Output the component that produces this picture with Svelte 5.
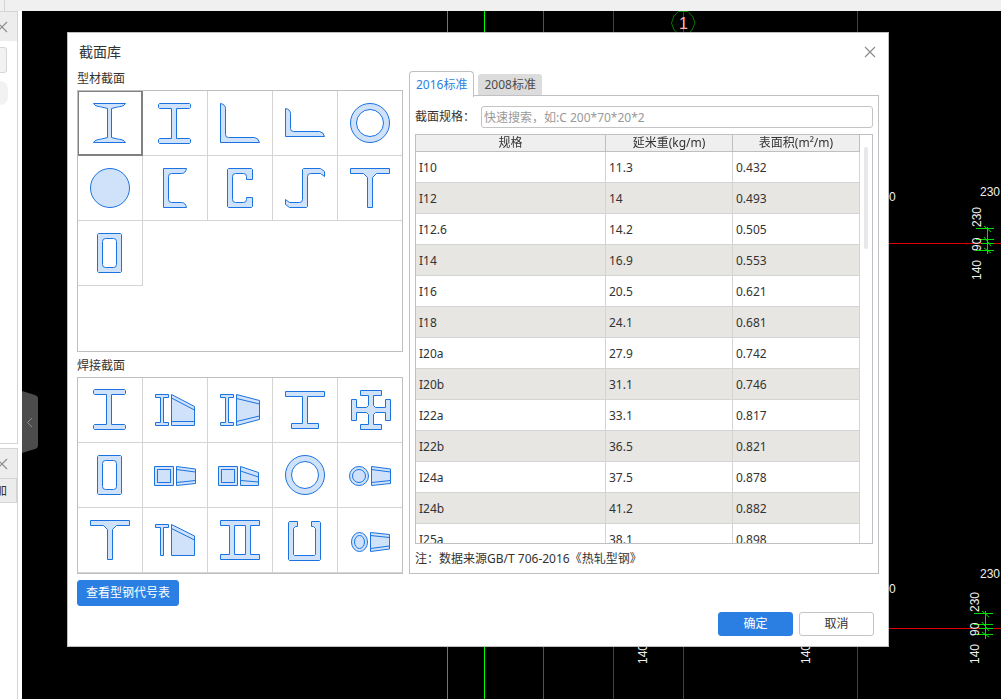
<!-- SectionLibrary: steel section picker over the drawing canvas -->
<script lang="ts">
  interface Section {
    name: string;
    d: string;
    // open lines drawn over the filled outline
    lines?: string;
  }

  const ring = 'M12.5 32a19.5 19.5 0 1 0 39 0a19.5 19.5 0 1 0 -39 0ZM18.5 32a13.5 13.5 0 1 0 27 0a13.5 13.5 0 1 0 -27 0Z';
  const box = 'M20.5 12.5H42.5L43.5 13.5V50.5L42.5 51.5H20.5L19.5 50.5V13.5ZM27.5 17.5H35.5Q38.5 17.5 38.5 20.5V43.5Q38.5 46.5 35.5 46.5H27.5Q24.5 46.5 24.5 43.5V20.5Q24.5 17.5 27.5 17.5Z';
  const tee = 'M12.5 12.5H51.5V17.5H38.5L34.5 21.5V51.5H29.5V21.5L25.5 17.5H12.5Z';
  const smallI = 'M12.5 16.5H25.5V19.5H20.5V44.5H25.5V47.5H12.5V44.5H17.5V19.5H12.5Z';

  const profiles: Section[] = [
    { name: '工字钢', d: 'M15.5 12.5H47.5C46 15.5 42 15.5 39.5 16L33.5 17.5V46.5L39.5 48C42 48.5 46 48.5 47.5 51.5H15.5C17 48.5 21 48.5 23.5 48L29.5 46.5V17.5L23.5 16C21 15.5 17 15.5 15.5 12.5Z' },
    { name: 'H型钢', d: 'M16.5 12.5H46.5L47.5 13.5V16.5L46.5 17.5H33.5V47.5H46.5L47.5 48.5V51.5L46.5 52.5H16.5L15.5 51.5V48.5L16.5 47.5H28.5V17.5H16.5L15.5 16.5V13.5Z' },
    { name: '等边角钢', d: 'M12.5 12.5Q17.5 13.5 17.5 17.5V43.5Q17.5 46.5 20.5 46.5H46.5Q50.5 47 51.5 51.5H12.5Z' },
    { name: '不等边角钢', d: 'M12.5 17.5Q17.5 18.5 17.5 22.5V37.5Q17.5 40.5 20.5 40.5H46.5Q50.5 41 51.5 45.5H12.5Z' },
    { name: '圆管', d: ring },
    { name: '圆钢', d: 'M12.5 32a19.5 19.5 0 1 0 39 0a19.5 19.5 0 1 0 -39 0Z' },
    { name: '槽钢', d: 'M20.5 12.5H43.5Q42.5 17.5 38.5 17.5H28.5Q25.5 17.5 25.5 20.5V43.5Q25.5 46.5 28.5 46.5H38.5Q42.5 46.5 43.5 51.5H20.5Z' },
    { name: 'C型钢', d: 'M20.5 12.5H43.5L44.5 13.5V23.5H38.5V20.5Q38.5 17.5 35.5 17.5H27.5Q24.5 17.5 24.5 20.5V43.5Q24.5 46.5 27.5 46.5H35.5Q38.5 46.5 38.5 43.5V41.5H44.5V50.5L43.5 51.5H20.5L19.5 50.5V13.5Z' },
    { name: 'Z型钢', d: 'M30.5 12.5H47.5L51.5 15.5V20.5L47.5 17.5H37.5Q34.5 17.5 34.5 20.5V50.5L33.5 51.5H16.5L12.5 48.5V43.5L16.5 46.5H26.5Q29.5 46.5 29.5 43.5V13.5Z' },
    { name: 'T型钢', d: tee },
    { name: '方管', d: box }
  ];

  const taper = 'M33.5 23.5L52.5 26V40.5L33.5 42.5Z';
  const taperLines = 'M33.5 26.5L52.5 29M33.5 39.5L52.5 37.5';

  const welded: Section[] = [
    { name: '焊接H型', d: 'M16.5 11.5H46.5L47.5 12.5V15.5L46.5 16.5H33.5V46.5H46.5L47.5 47.5V50.5L46.5 51.5H16.5L15.5 50.5V47.5L16.5 46.5H28.5V16.5H16.5L15.5 15.5V12.5Z' },
    { name: '单坡变截面H型', d: smallI + 'M28.5 16.5L51.5 28.5V47.5H28.5Z', lines: 'M28.5 20L51.5 32M28.5 43.5H51.5' },
    { name: '双坡变截面H型', d: smallI + 'M28.5 16.5L51.5 22.5V41.5L28.5 47.5Z', lines: 'M28.5 20.5L51.5 26M28.5 43.5L51.5 38' },
    { name: '不对称H型', d: 'M12.5 13.5H51.5V18.5H34.5V45.5H45.5V50.5H18.5V45.5H29.5V18.5H12.5Z' },
    { name: '十字型', d: 'M22.5 12.5H43.5V17.5H35.5V27.5L37.5 29.5H47.5V21.5H52.5V42.5H47.5V34.5H37.5L35.5 36.5V46.5H43.5V51.5H22.5V46.5H30.5V36.5L28.5 34.5H18.5V42.5H13.5V21.5H18.5V29.5H28.5L30.5 27.5V17.5H22.5Z' },
    { name: '焊接箱型', d: box },
    { name: '双坡变截面箱型', d: 'M11.5 23.5H30.5V42.5H11.5Z' + taper, lines: 'M14.5 26.5H27.5V39.5H14.5Z' + taperLines },
    { name: '单坡变截面箱型', d: 'M10.5 23.5H29.5V42.5H10.5ZM32.5 23.5L50.5 29.5V42.5H32.5Z', lines: 'M13.5 26.5H26.5V39.5H13.5ZM32.5 28L50.5 34M32.5 37.5L50.5 39' },
    { name: '焊接圆管', d: ring },
    { name: '变截面圆管', d: 'M11.5 33a9.5 9.5 0 1 0 19 0a9.5 9.5 0 1 0 -19 0Z' + taper, lines: 'M14.5 33a6.5 6.5 0 1 0 13 0a6.5 6.5 0 1 0 -13 0Z' + taperLines },
    { name: '焊接T型', d: tee },
    { name: '变截面T型', d: 'M12.5 16.5H25.5V19.5H20.5V47.5H17.5V19.5H12.5ZM28.5 16.5L51.5 28V47.5H28.5Z', lines: 'M28.5 20.5L51.5 32' },
    { name: '双腹板H型', d: 'M12.5 12.5H51.5V17.5H42.5V46.5H51.5V51.5H12.5V46.5H21.5V17.5H12.5ZM26.5 17.5V46.5H37.5V17.5Z' },
    { name: '焊接U型', d: 'M16.5 13.5H24.5V18.5H22.5L20.5 20.5V46.5L21.5 47.5H41.5L42.5 46.5V20.5L40.5 18.5H38.5V13.5H46.5L47.5 14.5V51.5L46.5 52.5H16.5L15.5 51.5V14.5Z' },
    { name: '变截面椭圆管', d: 'M13.5 34a8 9.5 0 1 0 16 0a8 9.5 0 1 0 -16 0ZM32.5 24.5L51.5 26.5V41L32.5 43.5Z', lines: 'M16.5 34a5 6.5 0 1 0 10 0a5 6.5 0 1 0 -10 0ZM32.5 27.5L51.5 29.5M32.5 40.5L51.5 38' }
  ];

  const specs = [
    ['I10', '11.3', '0.432'],
    ['I12', '14', '0.493'],
    ['I12.6', '14.2', '0.505'],
    ['I14', '16.9', '0.553'],
    ['I16', '20.5', '0.621'],
    ['I18', '24.1', '0.681'],
    ['I20a', '27.9', '0.742'],
    ['I20b', '31.1', '0.746'],
    ['I22a', '33.1', '0.817'],
    ['I22b', '36.5', '0.821'],
    ['I24a', '37.5', '0.878'],
    ['I24b', '41.2', '0.882'],
    ['I25a', '38.1', '0.898']
  ];

  let selected = $state('工字钢');
  let tab = $state('2016');
  let query = $state('');
  let rows = $derived(specs.filter((s) => s[0].toLowerCase().includes(query.trim().toLowerCase())));
  let scrollTop = $state(0);

  // dimension labels standing on their side: x, y of the baseline start
  const sideLabels = [
    { x: 981, y: 227, text: '230' },
    { x: 981, y: 251, text: '90' },
    { x: 981, y: 280, text: '140' },
    { x: 979, y: 612, text: '230' },
    { x: 979, y: 636, text: '90' },
    { x: 979, y: 664, text: '140' },
    { x: 647, y: 664, text: '140' },
    { x: 810, y: 664, text: '140' }
  ];
</script>

{#snippet cell(s: Section)}
  <button
    class="cell"
    class:selected={selected === s.name}
    aria-label={s.name}
    onclick={() => (selected = s.name)}
  >
    <svg viewBox="0 0 64 64" width="64" height="64" aria-hidden="true">
      <path d={s.d} fill="#d0e2fa" fill-rule="evenodd" stroke="#1a73e0" />
      {#if s.lines}
        <path d={s.lines} fill="none" stroke="#1a73e0" />
      {/if}
    </svg>
  </button>
{/snippet}

{#snippet cross()}
  <svg viewBox="0 0 12 12" width="12" height="12" aria-hidden="true">
    <path d="M1 1L11 11M11 1L1 11" stroke="currentColor" stroke-width="1.2" fill="none" />
  </svg>
{/snippet}

<div class="app">
  <div class="toolbar"></div>
  <div class="workspace">
    <aside>
      <section class="dock upper">
        <header><button class="plain" aria-label="关闭属性">{@render cross()}</button></header>
        <div class="stub"></div>
        <div class="dot"></div>
      </section>
      <section class="dock lower">
        <header><button class="plain" aria-label="关闭列表">{@render cross()}</button></header>
        <button class="add">加</button>
      </section>
    </aside>

    <main>
      <svg class="drawing" viewBox="22 11 979 688" preserveAspectRatio="xMinYMin slice" aria-hidden="true">
        <g fill="none">
          <path d="M447.5 11V699" stroke="#00c800" />
          <path d="M484.5 11V699" stroke="#00ff00" />
          <path d="M543.5 11V699" stroke="#008c00" />
          <path d="M613.5 11V699" stroke="#006e00" />
          <path d="M683.5 11V699M857.5 11V699" stroke="#d80000" />
          <path d="M67 243.5H1001M67 628.5H1001" stroke="#e00000" />
          <path d="M678.5 11.5H688L693 17L695 23L692 30L688 34H679L674 30L671.5 23L674 16Z" stroke="#007a00" />
          <path d="M976 228.5H994M976 239.5H994M981 243.5H994M976 250.5H994M987.5 227V254M984 226L991 232M984 237L991 246M984 248L991 253" stroke="#00e000" />
          <path d="M974 613.5H993M974 624.5H993M979 628.5H993M974 634.5H993M985.5 611V639M982 611L989 617M982 622L989 631M982 632L989 637" stroke="#00e000" />
        </g>
        <g class="dims">
          <text class="axis" x="679" y="29">1</text>
          <text x="980" y="196">230</text>
          <text x="980" y="578">230</text>
          <text x="889" y="201">0</text>
          <text x="889" y="593">0</text>
          {#each sideLabels as l}
            <text transform="translate({l.x} {l.y}) rotate(-90)">{l.text}</text>
          {/each}
        </g>
      </svg>

      <button class="handle" aria-label="收起面板">
        <svg viewBox="0 0 16 62" width="16" height="62" aria-hidden="true">
          <path d="M0 0L13 4Q16 5 16 8V54Q16 57 13 58L0 62Z" fill="#4c4c4c" />
          <path d="M10 27L5.5 31.5L10 36" fill="none" stroke="#8c8c8c" />
        </svg>
      </button>

      <div class="dialog" role="dialog" aria-labelledby="dialog-title">
        <div class="title-bar">
          <h1 id="dialog-title">截面库</h1>
          <button class="plain" aria-label="关闭">{@render cross()}</button>
        </div>

        <div class="content">
          <div class="picker">
            <h2>型材截面</h2>
            <div class="grid profiles">
              {#each profiles as s}{@render cell(s)}{/each}
            </div>
            <h2>焊接截面</h2>
            <div class="grid">
              {#each welded as s}{@render cell(s)}{/each}
            </div>
          </div>

          <div class="standards">
            <div class="tabs" role="tablist">
              <button role="tab" aria-selected={tab === '2016'} onclick={() => (tab = '2016')}>2016标准</button>
              <button role="tab" aria-selected={tab === '2008'} onclick={() => (tab = '2008')}>2008标准</button>
            </div>
            <div class="panel">
              <div class="search">
                <label for="spec">截面规格：</label>
                <input id="spec" type="text" bind:value={query} placeholder="快速搜索，如:C 200*70*20*2" />
              </div>
              <div class="table-box">
                <div class="scroller" onscroll={(e) => (scrollTop = e.currentTarget.scrollTop)}>
                  <table>
                    <thead>
                      <tr>
                        <th>规格</th>
                        <th class="num">延米重(kg/m)</th>
                        <th class="num">表面积(m²/m)</th>
                      </tr>
                    </thead>
                    <tbody>
                      {#each rows as row}
                        <tr>
                          {#each row as value}<td>{value}</td>{/each}
                        </tr>
                      {/each}
                    </tbody>
                  </table>
                </div>
                <div class="track">
                  <div class="thumb" style:transform="translateY({scrollTop}px)"></div>
                </div>
              </div>
              <p>注：数据来源GB/T 706-2016《热轧型钢》</p>
            </div>
          </div>
        </div>

        <div class="footer">
          <button class="btn primary codes">查看型钢代号表</button>
          <div class="actions">
            <button class="btn primary">确定</button>
            <button class="btn">取消</button>
          </div>
        </div>
      </div>
    </main>
  </div>
</div>

<style>
  :global(body) {
    background: #fff;
  }

  .app {
    display: flex;
    flex-direction: column;
    height: 100vh;
    overflow: hidden;
    font-family: 'Noto Sans', 'Noto Sans CJK SC', sans-serif;
    font-size: 12px;
    line-height: 16px;
    color: #333;
  }

  .app *,
  .app {
    box-sizing: border-box;
  }

  button,
  input {
    font: inherit;
    color: inherit;
    margin: 0;
    padding: 0;
  }

  button {
    cursor: pointer;
  }

  svg {
    display: block;
  }

  h1,
  h2,
  p {
    margin: 0;
    font-weight: normal;
  }

  .toolbar {
    height: 11px;
    flex-shrink: 0;
    background: #f0f0f0;
  }

  .toolbar::before {
    content: '';
    display: block;
    width: 4px;
    height: 11px;
    border-right: 1px solid #d4d4d4;
  }

  .workspace {
    flex: 1;
    display: flex;
    min-height: 0;
  }

  /* docked panels on the left, mostly collapsed */
  aside {
    width: 22px;
    padding-right: 4px;
    display: flex;
    flex-direction: column;
    gap: 4px;
    flex-shrink: 0;
  }

  .dock {
    border: 1px solid #d4d4d4;
    border-left: none;
    overflow: hidden;
  }

  .upper {
    flex: 433 1 0;
  }

  .lower {
    flex: 251 1 0;
    border-bottom: none;
  }

  .dock header {
    display: flex;
    align-items: center;
    justify-content: flex-end;
    height: 29px;
    padding-right: 9px;
    background: #ededee;
  }

  .plain {
    background: none;
    border: none;
    color: #8c8c8c;
  }

  .stub {
    width: 7px;
    height: 26px;
    margin-top: 6px;
    border: 1px solid #d8d8d8;
    border-left: none;
    border-radius: 0 3px 3px 0;
    background: #f2f2f2;
  }

  .dot {
    width: 8px;
    height: 24px;
    margin-top: 8px;
    border-radius: 0 12px 12px 0;
    background: #f2f2f2;
  }

  .add {
    display: flex;
    justify-content: flex-end;
    align-items: center;
    width: 17px;
    height: 25px;
    padding-right: 9px;
    border: 1px solid #d4d4d4;
    border-left: none;
    background: #ececec;
    white-space: nowrap;
  }

  main {
    flex: 1;
    position: relative;
    background: #000;
    overflow: hidden;
  }

  .drawing {
    width: 100%;
    height: 100%;
  }

  .dims {
    font-family: 'Liberation Sans', sans-serif;
    font-size: 12px;
    fill: #f0f0f0;
  }

  .axis {
    font-size: 16px;
    fill: #ffb0b0;
  }

  .handle {
    position: absolute;
    left: 0;
    top: 380px;
    border: none;
    background: none;
  }

  .dialog {
    position: absolute;
    left: 45px;
    right: 112px;
    top: 21px;
    padding: 0 9px 10px;
    background: #fff;
    border: 1px solid #bfbfbf;
  }

  .title-bar {
    display: flex;
    align-items: center;
    justify-content: space-between;
    height: 38px;
    padding: 0 3px 0 2px;
  }

  h1 {
    font-size: 14px;
    line-height: 20px;
  }

  .content {
    display: flex;
    gap: 6px;
  }

  h2 {
    font-size: 12px;
    line-height: 16px;
    margin-bottom: 3px;
  }

  .grid {
    display: grid;
    grid-template-columns: repeat(4, 65px) 64px;
    grid-auto-rows: 65px;
    border: 1px solid #bfbfbf;
  }

  .profiles {
    min-height: 262px;
    align-content: start;
    margin-bottom: 6px;
  }

  .cell {
    border: 0 solid #d4d4d4;
    border-width: 0 1px 1px 0;
    background: #fff;
    overflow: hidden;
  }

  .cell:nth-child(5n) {
    border-right-width: 0;
  }

  .cell.selected {
    border-color: #808080;
    box-shadow: inset 0 0 0 1px #808080;
  }

  .standards {
    flex: 1;
    min-width: 0;
    display: flex;
    flex-direction: column;
  }

  .tabs {
    display: flex;
    align-items: flex-end;
    gap: 4px;
    height: 25px;
    margin-bottom: -1px;
  }

  .tabs button {
    height: 21px;
    margin-bottom: 1px;
    padding: 0 6px;
    border: none;
    border-radius: 3px 3px 0 0;
    background: #dcdcdc;
    color: #4c4c4c;
  }

  .tabs button[aria-selected='true'] {
    height: 26px;
    margin-bottom: -1px;
    border: 1px solid #bfc0c4;
    border-bottom: none;
    border-radius: 4px 4px 0 0;
    background: #fff;
    color: #2c7fe2;
    z-index: 1;
  }

  .panel {
    flex: 1;
    display: flex;
    flex-direction: column;
    min-height: 0;
    padding: 10px 5px 6px;
    border: 1px solid #bfc0c4;
  }

  .search {
    display: flex;
    align-items: center;
    gap: 6px;
    margin-bottom: 6px;
  }

  .search input {
    flex: 1;
    min-width: 0;
    height: 22px;
    padding: 0 2px;
    border: 1px solid #c4c4c4;
    border-radius: 3px;
    outline: none;
  }

  .search input::placeholder {
    color: #999;
  }

  .table-box {
    flex: 1 1 0;
    display: flex;
    min-height: 0;
    border: 1px solid #bfc0c4;
  }

  .scroller {
    flex: 1;
    overflow-y: auto;
    scrollbar-width: none;
  }

  table {
    width: 100%;
    table-layout: fixed;
    border-collapse: separate;
    border-spacing: 0;
  }

  th,
  td {
    border: 0 solid #d4d4d4;
    border-width: 0 1px 1px 0;
  }

  th {
    position: sticky;
    top: 0;
    height: 17px;
    padding: 0;
    border-color: #bfbfbf;
    background: #efefef;
    font-weight: normal;
    line-height: 16px;
  }

  .num {
    width: 127px;
  }

  td {
    height: 31px;
    padding: 2px 3px 0;
  }

  tbody tr:nth-child(even) {
    background: #e8e6e2;
  }

  .track {
    width: 12px;
    padding: 12px 4px 0;
  }

  .thumb {
    height: 102px;
    border-radius: 2px;
    background: #e8e8e8;
  }

  p {
    margin-top: 7px;
  }

  .footer {
    display: flex;
    justify-content: space-between;
    align-items: flex-start;
    padding: 6px 5px 0 0;
  }

  .actions {
    display: flex;
    gap: 6px;
    padding-top: 32px;
  }

  .btn {
    width: 75px;
    height: 24px;
    border: 1px solid #c4c4c4;
    border-radius: 3px;
    background: #fff;
  }

  .btn.primary {
    border-color: #2c7fe2;
    background: #2c7fe2;
    color: #fff;
  }

  .btn.codes {
    width: 102px;
    height: 26px;
  }
</style>
